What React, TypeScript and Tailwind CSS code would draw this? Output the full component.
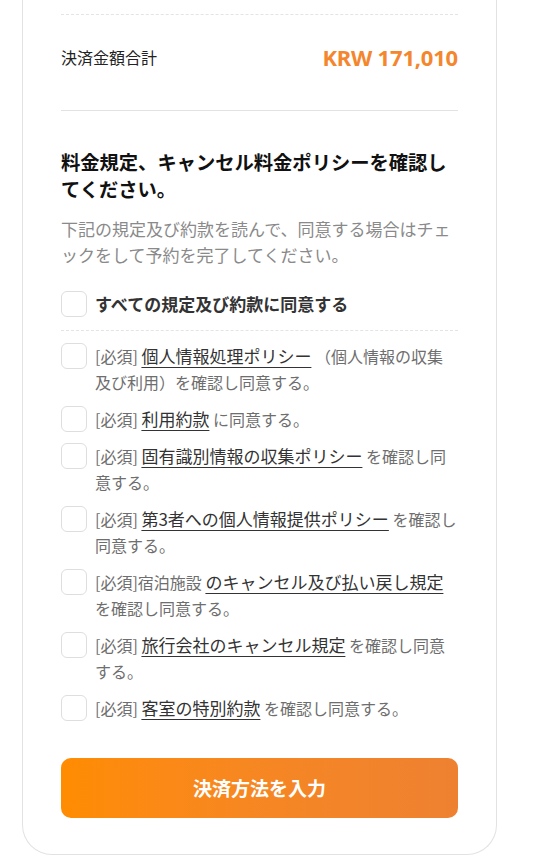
import React from "react";

const jp = { fontFamily: '"Noto Sans CJK JP", "Noto Sans", sans-serif' };

type Item = { pre: string; link: string; post: string };

const items: Item[] = [
  { pre: "[必須] ", link: "個人情報処理ポリシー", post: " （個人情報の収集及び利用）を確認し同意する。" },
  { pre: "[必須] ", link: "利用約款", post: " に同意する。" },
  { pre: "[必須] ", link: "固有識別情報の収集ポリシー", post: " を確認し同意する。" },
  { pre: "[必須] ", link: "第3者への個人情報提供ポリシー", post: " を確認し同意する。" },
  { pre: "[必須]宿泊施設 ", link: "のキャンセル及び払い戻し規定", post: " を確認し同意する。" },
  { pre: "[必須] ", link: "旅行会社のキャンセル規定", post: " を確認し同意する。" },
  { pre: "[必須] ", link: "客室の特別約款", post: " を確認し同意する。" },
];

function Box() {
  return <span className="block w-[26px] h-[26px] shrink-0 rounded-[6px] border border-[#dedede] bg-white" />;
}

export default function App() {
  return (
    <div className="min-h-[862px] bg-white" style={jp}>
      <div className="ml-[22px] w-[475px] border-x border-b border-[#e2e2e2] rounded-b-[30px] px-[38px] pt-[14px] pb-[36px] bg-white">
        <div className="border-t border-dashed border-[#e4e4e4]" />
        <div className="flex items-center justify-between h-[30px] mt-[27px] mb-[38px]">
          <span className="text-[16px] text-[#222]">決済金額合計</span>
          <span
            className="text-[22px] font-bold text-[#f4862d] tracking-[-0.2px]"
            style={{ fontFamily: '"Noto Sans", sans-serif' }}
          >
            KRW 171,010
          </span>
        </div>
        <div className="border-t border-[#e2e2e2]" />

        <h2 className="mt-[38px] text-[19.3px] leading-[27px] font-bold text-[#111]">
          料金規定、キャンセル料金ポリシーを確認してください。
        </h2>
        <p className="mt-[13px] text-[17px] leading-[26px] text-[#8a8a8a]">
          下記の規定及び約款を読んで、同意する場合はチェックをして予約を完了してください。
        </p>

        <div className="mt-[23px] flex items-center gap-[8px] h-[26px]">
          <Box />
          <span className="text-[17px] font-bold text-[#333]">すべての規定及び約款に同意する</span>
        </div>
        <div className="mt-[13px] border-t border-dashed border-[#e4e4e4]" />

        <div className="pt-[12px] flex flex-col gap-[11px]">
          {items.map((it, i) => (
            <div key={i} className="flex items-start gap-[8px]">
              <Box />
              <p className="text-[16px] leading-[26px] text-[#6e6e6e]">
                {it.pre}
                <span className="text-[17px] leading-[26px] text-[#333] underline decoration-[#333] underline-offset-[4px]">
                  {it.link}
                </span>
                {it.post}
              </p>
            </div>
          ))}
        </div>

        <button className="mt-[37px] w-full h-[60px] rounded-[10px] bg-linear-to-r from-[#ff8c00] to-[#ee8131] text-white text-[19px] font-bold">
          決済方法を入力
        </button>
      </div>
    </div>
  );
}
